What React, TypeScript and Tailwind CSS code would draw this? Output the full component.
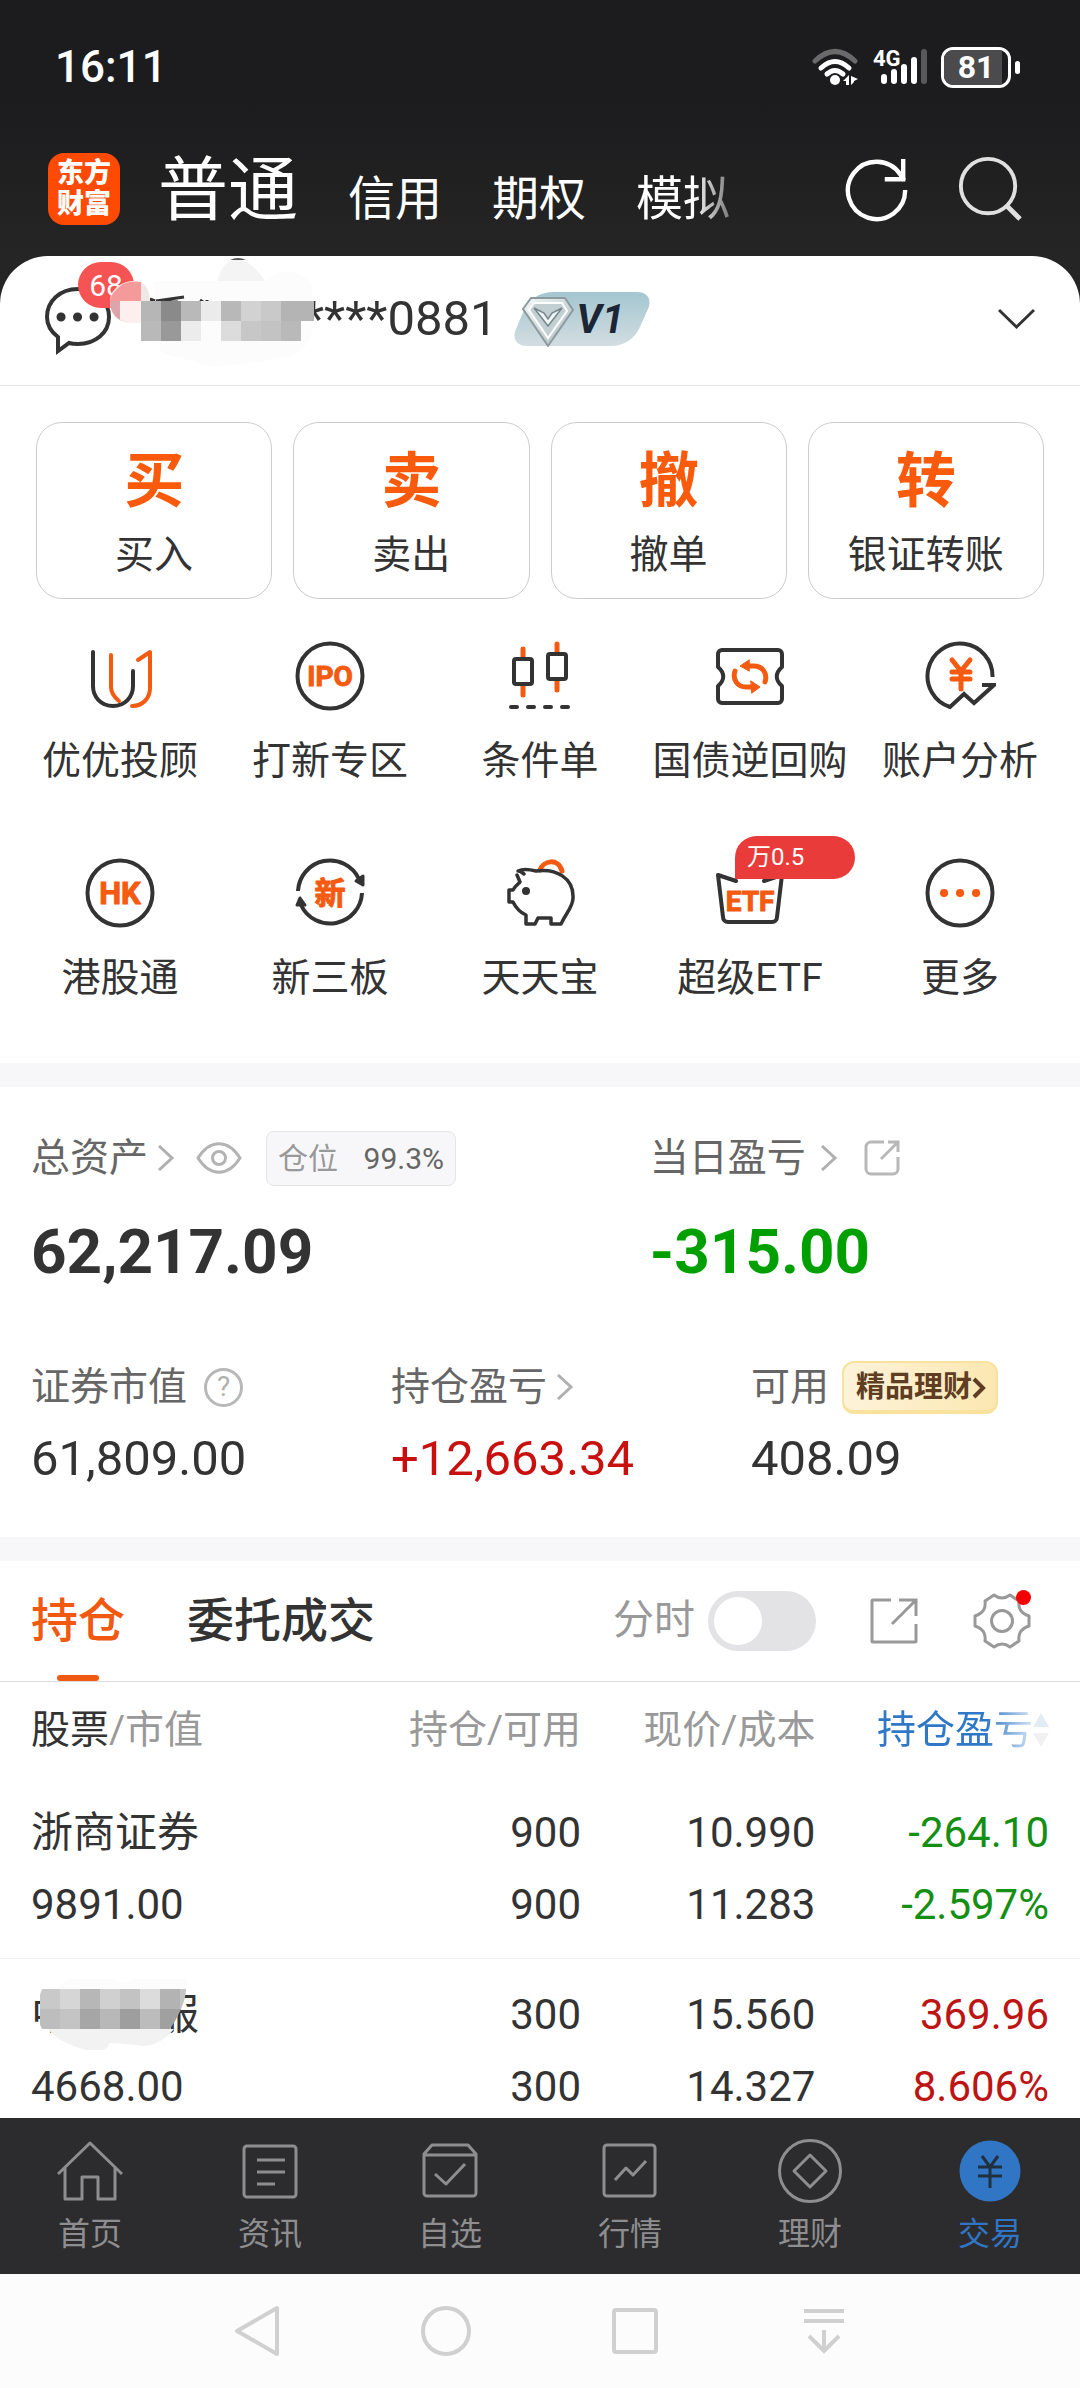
import type { ReactNode } from 'react'

const INK = '#333333'
const ORANGE = '#f45b10'

const TRADES = [
  { glyph: '买', label: '买入' },
  { glyph: '卖', label: '卖出' },
  { glyph: '撤', label: '撤单' },
  { glyph: '转', label: '银证转账' },
]

const HOLDINGS = [
  { name: '浙商证券', value: '9891.00', qty: '900', avail: '900', price: '10.990', cost: '11.283', pnl: '-264.10', pct: '-2.597%', up: false },
  { name: '', value: '4668.00', qty: '300', avail: '300', price: '15.560', cost: '14.327', pnl: '369.96', pct: '8.606%', up: true },
]

/* ---------- icons ---------- */

function Glyph({ children }: { children: ReactNode }) {
  return (
    <svg className="size-[72px]" viewBox="0 0 72 72" fill="none" stroke={INK} strokeWidth="4" strokeLinecap="round" strokeLinejoin="round">
      {children}
    </svg>
  )
}

function GlyphText({ size, y, children }: { size: number; y: number; children: string }) {
  return (
    <text x="36" y={y} textAnchor="middle" fontSize={size} fontWeight="700" fill={ORANGE} stroke={ORANGE} strokeWidth="1">
      {children}
    </text>
  )
}

const AdvisorIcon = (
  <Glyph>
    <path d="M9 11v34c0 11 8 20 20 20s20-9 20-20V30" />
    <path d="M27 14v32c0 6 3 10 8 14M54 19l12-8v36c0 10-7 18-18 18" stroke={ORANGE} />
  </Glyph>
)

const IpoIcon = (
  <Glyph>
    <circle cx="36" cy="35" r="32.500" />
    <GlyphText size={28} y={45}>IPO</GlyphText>
  </Glyph>
)

const CandleIcon = (
  <Glyph>
    <path d="M19 8v9M19 45v9M53 3v9M53 40v9" stroke={ORANGE} strokeWidth="5" />
    <rect x="10" y="18" width="18" height="25" rx="2" />
    <rect x="44" y="13" width="18" height="25" rx="2" />
    <path d="M7 66h6M24 66h6M41 66h6M58 66h6" />
  </Glyph>
)

const TicketIcon = (
  <Glyph>
    <path d="M8 9h56a4 4 0 0 1 4 4v13c-7 6-7 13 0 19v13a4 4 0 0 1-4 4H8a4 4 0 0 1-4-4V45c7-6 7-13 0-19V13a4 4 0 0 1 4-4z" />
    <path d="M21 30c-3 9 3 16 11 16h6M51 41c3-9-3-16-11-16h-6" stroke={ORANGE} strokeWidth="5" />
    <path d="M37 40l9 6-8 6zM35 19l-9 6 9 5z" fill={ORANGE} stroke={ORANGE} strokeWidth="1" />
  </Glyph>
)

const AnalysisIcon = (
  <Glyph>
    <path d="M68.500 36A32.500 32.500 0 1 0 26 66l14-13 10 9 20-18H58" strokeLinecap="butt" strokeLinejoin="miter" />
    <path d="M28 19l9 11 9-11M37 30v18M28 31h18M28 38h18" stroke={ORANGE} strokeWidth="5" />
  </Glyph>
)

const HkIcon = (
  <Glyph>
    <circle cx="36" cy="35" r="32.500" />
    <GlyphText size={31} y={46}>HK</GlyphText>
  </Glyph>
)

const BoardIcon = (
  <Glyph>
    <path d="M4 33A32 32 0 0 1 65 21M68 35A32 32 0 0 1 7 47" strokeLinecap="butt" />
    <path d="M62 23l7-5v9zM3 47l3-7 5 7z" fill={INK} strokeWidth="3" />
    <GlyphText size={31} y={46}>新</GlyphText>
  </Glyph>
)

const PiggyIcon = (
  <Glyph>
    <path d="M36 12c3-9 18-13 22 1" stroke={ORANGE} strokeWidth="5" />
    <path d="M20 16c-4-3-4-3-6-3 6-3 14-1 18 0 20-3 38 7 37 27 0 9-7 15-12 26H47v-6H34l-3 6H22v-9c-7-3-10-7-13-13H5V32h4c2-4 5-6 7-8l-3-7" strokeWidth="3.500" />
    <circle cx="22" cy="33" r="4" fill={INK} stroke="none" />
  </Glyph>
)

const EtfIcon = (
  <Glyph>
    <path d="M22 23L4 17l5 42a5 5 0 0 0 5 5h44a5 5 0 0 0 5-5l5-42-18 6" />
    <GlyphText size={28} y={53}>ETF</GlyphText>
  </Glyph>
)

const MoreIcon = (
  <Glyph>
    <circle cx="36" cy="35" r="32.500" />
    <path d="M20 35h.1M36 35h.1M52 35h.1" stroke={ORANGE} strokeWidth="8" />
  </Glyph>
)

const SERVICES: { label: string; icon: ReactNode; badge?: string }[] = [
  { label: '优优投顾', icon: AdvisorIcon },
  { label: '打新专区', icon: IpoIcon },
  { label: '条件单', icon: CandleIcon },
  { label: '国债逆回购', icon: TicketIcon },
  { label: '账户分析', icon: AnalysisIcon },
  { label: '港股通', icon: HkIcon },
  { label: '新三板', icon: BoardIcon },
  { label: '天天宝', icon: PiggyIcon },
  { label: '超级ETF', icon: EtfIcon, badge: '万0.5' },
  { label: '更多', icon: MoreIcon },
]

function Chevron() {
  return (
    <svg className="h-[26px] w-[18px] shrink-0" viewBox="0 0 18 26" fill="none" stroke="#b0b0b0" strokeWidth="3">
      <path d="M2 1l13 12L2 25" />
    </svg>
  )
}

function NavIcon({ children }: { children: ReactNode }) {
  return (
    <svg className="size-[66px]" viewBox="0 0 66 66" fill="none" stroke="#8e8e90" strokeWidth="3" strokeLinejoin="round">
      {children}
    </svg>
  )
}

const NAV: { label: string; icon: ReactNode; active?: boolean }[] = [
  { label: '首页', icon: <path d="M1 36L33 5l32 31M8 30v31h17V39h16v22h17V30" /> },
  {
    label: '资讯',
    icon: (
      <>
        <rect x="7" y="8" width="52" height="51" rx="3" />
        <path d="M20 22h28M20 34h28M20 46h18" />
      </>
    ),
  },
  {
    label: '自选',
    icon: (
      <>
        <path d="M7 16l8-9h36l8 9v39a3 3 0 0 1-3 3H10a3 3 0 0 1-3-3zM7 17h52" />
        <path d="M18 36l11 10 19-20" />
      </>
    ),
  },
  {
    label: '行情',
    icon: (
      <>
        <rect x="7" y="7" width="51" height="51" rx="3" />
        <path d="M18 42l11-12 7 7 13-14" />
      </>
    ),
  },
  {
    label: '理财',
    icon: (
      <>
        <circle cx="33" cy="33" r="30.500" />
        <path d="M33 17l16 16-16 16-16-16z" />
      </>
    ),
  },
  {
    label: '交易',
    active: true,
    icon: (
      <>
        <circle cx="33" cy="33" r="30.500" fill="#3076c5" stroke="none" />
        <path d="M25 18l8 11 8-11M33 29v21M21 29h24M21 38h24" stroke="#20303f" />
      </>
    ),
  },
]

/* ---------- sections ---------- */

function StatusBar() {
  return (
    <div className="flex h-[134px] items-center justify-between pr-[60px] pl-[55px] text-white">
      <span className="text-[44px] font-medium">16:11</span>
      <div className="flex items-center gap-[14px]">
        <svg className="h-[40px] w-[48px]" viewBox="0 0 48 40" fill="none" stroke="#fff" strokeWidth="5" strokeLinecap="round">
          <path d="M4 14Q24-5 44 14" stroke="#6a6a6b" />
          <path d="M10 21Q24 8 38 21M16 27Q24 20 32 27" />
          <circle cx="24" cy="33" r="5" fill="#fff" stroke="none" />
          <path d="M32 34l6-6v10h-3v-4zM40 29l7 3-4 2v1l-3 3z" fill="#fff" stroke="none" />
        </svg>
        <svg className="h-[40px] w-[54px]" viewBox="0 0 54 40" stroke="#fff" strokeWidth="6" strokeLinecap="round">
          <text x="0" y="19" fontSize="22" fontWeight="700" fill="#fff" stroke="none">4G</text>
          <path d="M11 30v4M21 25v9M31 20v14M41 13v21" />
          <path d="M51 5v29" stroke="#59595a" />
        </svg>
        <div className="flex items-center gap-1">
          <div className="relative flex h-[41px] w-[70px] items-center justify-center overflow-hidden rounded-xl border-3 border-white">
            <div className="absolute inset-y-0 left-0 w-[58px] bg-[#4b4b4d]" />
            <span className="relative text-[32px] leading-none font-bold">81</span>
          </div>
          <div className="h-[13px] w-[5px] rounded-full bg-white" />
        </div>
      </div>
    </div>
  )
}

function TopTabs() {
  return (
    <div className="flex h-[122px] items-center pr-[58px] pb-[12px] pl-[48px] text-white">
      <div className="flex size-[72px] shrink-0 flex-col items-center justify-center rounded-2xl bg-[#ff4a03] text-[27px] leading-[31px] font-black">
        <span>东方</span>
        <span>财富</span>
      </div>
      <nav className="ml-[38px] flex flex-1 items-baseline gap-[50px] pt-[12px] text-[47px] leading-[94px] whitespace-nowrap">
        <button className="text-[70px]">普通</button>
        <button>信用</button>
        <button>期权</button>
        <button className="[mask-image:linear-gradient(to_right,#000_60%,#0006)]">模拟</button>
      </nav>
      <button aria-label="刷新">
        <svg className="size-[66px]" viewBox="0 0 68 68" fill="none" stroke="#fff" strokeWidth="4.500">
          <path d="M63 35A29.500 29.500 0 1 1 58 19L62 25" />
          <path d="M42 24h19V3" />
        </svg>
      </button>
      <button aria-label="搜索" className="ml-[46px]">
        <svg className="size-[66px]" viewBox="0 0 68 68" fill="none" stroke="#e0e0e0" strokeWidth="4">
          <circle cx="33" cy="31" r="28" />
          <path d="M52 51l14 14" strokeWidth="5" />
        </svg>
      </button>
    </div>
  )
}

// pixelated strip over the masked owner name
function NameMosaic() {
  const rows = [
    ['#b6b6b6', '#8a8a8a', '#b9b9b9', '#ebebeb', '#b8b8b8', '#d2d2d2', '#c9c9c9', '#b4b4b4'],
    ['#b9b9b9', '#999999', '#ececec', '#fcfcfc', '#dcdcdc', '#c7c7c7', '#c3c3c3', '#b9b9b9'],
  ]
  return (
    <svg className="absolute top-0 left-[108px] h-[120px] w-[208px]" viewBox="0 0 208 120">
      <path d="M108 25C112 8 122 3 130 3c12 2 20 12 28 22 10-12 34-14 46 4v46c-4 18-18 26-34 28-30 4-60 10-76 6-14-8-30-6-42-14l-6-70z" fill="#fcfcfc" />
      <path d="M110 25C113 9 122 3 130 3c12 2 20 12 27 22z" fill="#f4f4f4" />
      <path d="M122 4q8-4 16 0z" fill="#555" />
      <path d="M42 43l5 2M48 45l28-4M52 46h18M92 44l3 2M99 44v2" stroke={INK} strokeWidth="3" />
      <path d="M2 45c0-12 12-20 24-20s16 10 16 22v20H22C8 66 2 58 2 45z" fill="#f0e7e7" />
      <path d="M10 32c6-6 12-7 23-6v19H2c1-6 4-9 8-13z" fill="#f59a9b" />
      <path d="M2 45h10v19C5 60 2 53 2 45z" fill="#dba5ab" />
      <path d="M12 45h21v22H22c-4-1-7-2-10-4z" fill="#fdefef" />
      {rows.map((row, r) =>
        row.map((fill, c) => (
          <rect key={`${r}-${c}`} x={33 + c * 20} y={45 + r * 20} width={r === 0 && c === 7 ? 33 : 20} height="20" fill={fill} />
        )),
      )}
    </svg>
  )
}

function AccountRow() {
  return (
    <div className="relative flex h-[130px] items-center border-b border-[#e6e6e6] pr-[45px] pb-[3px] pl-[44px]">
      <svg className="h-[72px] w-[68px]" viewBox="0 0 68 72" fill="none" stroke={INK} strokeWidth="4">
        <path d="M14 54C6 48 3 41 3 34 3 18 16 6 34 6s31 12 31 28-14 27-31 27c-4 0-6 0-9-1l-11 8z" />
        <path d="M17 34h.1M33.500 34h.1M50 34h.1" strokeWidth="9" strokeLinecap="round" />
      </svg>
      <span className="absolute top-[6px] left-[78px] flex h-[46px] w-[56px] items-center justify-center rounded-full bg-[#f55354] text-[30px] text-white">
        68
      </span>
      <span className="ml-[191px] text-[49px] text-[#333]">****0881</span>
      <NameMosaic />
      <div className="relative ml-[16px] h-[56px] w-[138px]">
        <svg className="absolute inset-0 size-full" viewBox="0 0 138 56">
          <defs>
            <linearGradient id="tag" x1="0" y1="0" x2="0" y2="1">
              <stop offset="0" stopColor="#a3c6d0" />
              <stop offset="1" stopColor="#d3dde1" />
            </linearGradient>
            <linearGradient id="gem" x1="0" y1="0" x2="1" y2="1">
              <stop offset="0" stopColor="#f4f8f9" />
              <stop offset="1" stopColor="#a9b9bd" />
            </linearGradient>
          </defs>
          <path d="M40 1h83c11 0 15 8 11 17l-9 20c-5 10-15 17-28 17H13C2 55-2 47 2 38l8-19C15 8 26 1 40 1z" fill="url(#tag)" />
          <path d="M17 7h34l8 12-25 36L9 18z" fill="url(#gem)" stroke="#8c999d" strokeWidth="2" strokeLinejoin="round" />
          <path d="M20 12h28l5 8-19 27-19-28z" fill="#c3d0d3" stroke="#fff" strokeWidth="2" />
          <path d="M20 17l14 18 14-18-10 5-4 6-4-6z" fill="#eef5f6" stroke="#76868a" strokeWidth="1.500" />
        </svg>
        <span className="absolute top-[2px] left-[63px] text-[40px] leading-[54px] font-bold text-[#1c2536] italic">V1</span>
      </div>
      <button aria-label="切换账户" className="ml-auto">
        <svg className="h-[22px] w-[37px]" viewBox="0 0 37 22" fill="none" stroke={INK} strokeWidth="3">
          <path d="M1 2l17.500 17L36 2" />
        </svg>
      </button>
    </div>
  )
}

function QuickActions() {
  return (
    <section className="pt-[36px] pb-[57px]">
      <div className="grid grid-cols-4 gap-[21px] px-[36px]">
        {TRADES.map((t) => (
          <button key={t.label} className="flex flex-col items-center rounded-[26px] border border-[#ccc] pt-[24px] pb-[15px]">
            <span className="text-[60px] leading-[70px] font-bold text-[#f95a0c]">{t.glyph}</span>
            <span className="mt-[10px] text-[39px] leading-[56px]">{t.label}</span>
          </button>
        ))}
      </div>
      <div className="mt-[42px] grid grid-cols-5 gap-y-[69px] px-[15px]">
        {SERVICES.map((s) => (
          <button key={s.label} className="relative flex flex-col items-center">
            {s.icon}
            {s.badge && (
              <span className="absolute -top-[22px] left-[90px] h-[43px] w-[120px] rounded-r-full rounded-tl-full bg-[#ea3b3b] pl-[12px] text-left text-[24px] leading-[43px] text-white">
                {s.badge}
              </span>
            )}
            <span className="mt-[20px] text-[39px] leading-[56px] whitespace-nowrap">{s.label}</span>
          </button>
        ))}
      </div>
    </section>
  )
}

function Assets() {
  return (
    <section className="border-y-24 border-[#f7f7f9] pt-[44px] pb-[48px]">
      <div className="flex">
        <div className="w-[57.3%] pl-[31px]">
          <div className="flex h-[54px] items-center text-[39px] text-[#666]">
            总资产
            <span className="ml-[9px] flex"><Chevron /></span>
            <svg className="ml-[21px] h-[34px] w-[46px]" viewBox="0 0 46 34" fill="none" stroke="#b3b3b3" strokeWidth="3">
              <path d="M2 17C14-2 32-2 44 17 32 36 14 36 2 17z" />
              <circle cx="23" cy="17" r="6.500" />
            </svg>
            <span className="ml-[24px] flex h-[55px] w-[190px] items-center justify-between rounded-lg border border-[#e5e5e8] bg-[#f7f7f9] px-[11px] text-[30px]">
              <span className="text-[#999]">仓位</span>
              <span>99.3%</span>
            </span>
          </div>
          <div className="mt-[32px] text-[62px] leading-[70px] font-bold">62,217.09</div>
        </div>
        <div className="pl-[31px]">
          <div className="flex h-[54px] items-center text-[39px] text-[#666]">
            当日盈亏
            <span className="ml-[14px] flex"><Chevron /></span>
            <svg className="ml-[26px] size-[36px]" viewBox="0 0 36 36" fill="none" stroke="#b8b8b8" strokeWidth="3">
              <path d="M20 2H7a5 5 0 0 0-5 5v22a5 5 0 0 0 5 5h22a5 5 0 0 0 5-5V17M24 2h10v10M34 2L17 19" />
            </svg>
          </div>
          <div className="mt-[32px] text-[62px] leading-[70px] font-bold text-[#009f00]">-315.00</div>
        </div>
      </div>
      <div className="mt-[73px] grid grid-cols-3">
        <div className="pl-[31px]">
          <div className="flex h-[54px] items-center text-[39px] text-[#666]">
            证券市值
            <span className="ml-[17px] flex size-[39px] items-center justify-center rounded-full border-3 border-[#b8b8b8] text-[28px] text-[#b0b0b0]">?</span>
          </div>
          <div className="mt-[15px] text-[49px] leading-[60px]">61,809.00</div>
        </div>
        <div className="pl-[31px]">
          <div className="flex h-[54px] items-center text-[39px] text-[#666]">
            持仓盈亏
            <span className="ml-[9px] flex"><Chevron /></span>
          </div>
          <div className="mt-[15px] text-[49px] leading-[60px] text-[#c8100f]">+12,663.34</div>
        </div>
        <div className="pl-[31px]">
          <div className="flex h-[54px] items-center text-[39px] text-[#666]">
            可用
            <button className="ml-[13px] flex h-[53px] items-center rounded-xl border-2 border-b-4 border-[#f8e29c] bg-linear-to-r from-[#fdf3da] to-[#fbe7b0] pt-[4px] pr-[10px] pl-[12px] text-[29px] font-bold text-[#5f3d22]">
              精品理财
              <svg className="h-[22px] w-[14px]" viewBox="0 0 14 22" fill="none" stroke="#5f3d22" strokeWidth="4">
                <path d="M2 2l9 9-9 9" />
              </svg>
            </button>
          </div>
          <div className="mt-[15px] text-[49px] leading-[60px]">408.09</div>
        </div>
      </div>
    </section>
  )
}

function PositionTabs() {
  return (
    <div className="flex h-[121px] items-center border-b border-[#ddd] pr-[49px] pl-[31px] text-[47px]">
      <button className="relative flex h-full items-center font-medium text-[#f0590f]">
        持仓
        <span className="absolute bottom-0 left-1/2 h-[6px] w-[42px] -translate-x-1/2 rounded-full bg-[#f0590f]" />
      </button>
      <button className="ml-[62px] font-medium">委托成交</button>
      <label className="ml-auto flex items-center gap-[13px] text-[41px] text-[#999]">
        分时
        <input
          type="checkbox"
          className="relative h-[60px] w-[108px] appearance-none rounded-full bg-[#e3e3e6] before:absolute before:top-[6px] before:left-[6px] before:size-[48px] before:rounded-full before:bg-white"
        />
      </label>
      <button aria-label="分享" className="ml-[54px]">
        <svg className="size-[48px]" viewBox="0 0 48 48" fill="none" stroke="#999" strokeWidth="3">
          <path d="M21 3H3a1 1 0 0 0-1 1v40a1 1 0 0 0 1 1h42a1 1 0 0 0 1-1V27M29 3h17v16M46 3L22 27" />
        </svg>
      </button>
      <button aria-label="设置" className="relative ml-[55px]">
        <svg className="size-[58px]" viewBox="0 0 58 58" fill="none" stroke="#999" strokeWidth="3" strokeLinejoin="round">
          <path d="M21 3q8 6 16 0l9 6c-1 8 2 12 10 15v10c-8 3-11 7-10 15l-9 6q-8-6-16 0l-9-6c1-8-2-12-10-15V24c8-3 11-7 10-15z" />
          <circle cx="29" cy="29" r="10.500" />
        </svg>
        <span className="absolute -top-[2px] right-0 size-[15px] rounded-full bg-[#f40000]" />
      </button>
    </div>
  )
}

function MaskedName() {
  const rows = [
    ['#c9c9c9', '#d6d6d6', '#b7b7b7', '#d0d0d0', '#c3c3c3', '#dcdcdc', '#b3b3b3', '#c4c4c4'],
    ['#bdbdbd', '#c4c4c4', '#a6a6a6', '#b8b8b8', '#9e9e9e', '#bcbcbc', '#a0a0a0', '#aaaaaa'],
  ]
  return (
    <span className="relative flex w-[168px] justify-between">
      <span>中</span>
      <span>服</span>
      <svg className="absolute top-0 left-[5px] h-[80px] w-[156px]" viewBox="0 0 156 80">
        <defs>
          <clipPath id="blob">
            <path d="M6 10h144c0 12-8 28-16 40H6C1 42 1 22 6 10z" />
          </clipPath>
        </defs>
        <path d="M20 10C40-12 70-6 84 4 100 4 130-16 151-20v31z" fill="#fcfcfc" />
        <path d="M12 50h126c-8 10-18 16-30 17-12-1-22-3-34-3-3 4-4 6-7 7H50c-14-4-30-10-38-21z" fill="#f2f2f2" />
        <g clipPath="url(#blob)">
          {rows.map((row, r) =>
            row.map((fill, c) => <rect key={`${r}-${c}`} x={4 + c * 20} y={10 + r * 20} width="20" height="20" fill={fill} />),
          )}
        </g>
      </svg>
    </span>
  )
}

function Holdings() {
  return (
    <table className="w-full table-fixed text-right text-[42px] leading-[72px]">
      <thead className="h-[95px] text-[39px] text-[#999]">
        <tr>
          <th className="pl-[31px] text-left font-normal"><span className="text-[#333]">股票</span>/市值</th>
          <th className="w-[21.7%] font-normal">持仓/可用</th>
          <th className="w-[21.7%] font-normal">现价/成本</th>
          <th className="w-[24.5%] pr-[31px] font-normal">
            <button className="inline-flex items-center text-[#2f78c8]">
              <span className="[mask-image:linear-gradient(to_right,#000_70%,#0003)]">持仓盈亏</span>
              <svg className="h-[36px] w-[16px]" viewBox="0 0 16 36">
                <path d="M8 1l8 14H0z" fill="#e2ecf7" />
                <path d="M8 35l8-14H0z" fill="#f1f1f2" />
              </svg>
            </button>
          </th>
        </tr>
      </thead>
      <tbody>
        {HOLDINGS.map((h) => (
          <tr key={h.value} className="border-b border-[#eee]">
            <td className="pt-[20px] pb-[17px] pl-[31px] text-left">
              <div>{h.name || <MaskedName />}</div>
              <div>{h.value}</div>
            </td>
            <td className="pt-[20px] pb-[17px]">
              <div>{h.qty}</div>
              <div>{h.avail}</div>
            </td>
            <td className="pt-[20px] pb-[17px]">
              <div>{h.price}</div>
              <div>{h.cost}</div>
            </td>
            <td className={h.up ? 'pt-[20px] pr-[31px] pb-[17px] text-[#bd1414]' : 'pt-[20px] pr-[31px] pb-[17px] text-[#148f14]'}>
              <div>{h.pnl}</div>
              <div>{h.pct}</div>
            </td>
          </tr>
        ))}
      </tbody>
    </table>
  )
}

function BottomNav() {
  return (
    <nav className="grid h-[156px] shrink-0 grid-cols-6 bg-[#2c2c2e] pt-[20px]">
      {NAV.map((n) => (
        <a key={n.label} href="#" className="flex flex-col items-center">
          <NavIcon>{n.icon}</NavIcon>
          <span className={n.active ? 'mt-[10px] text-[32px] leading-[40px] text-[#3076c5]' : 'mt-[10px] text-[32px] leading-[40px] text-[#8e8e90]'}>
            {n.label}
          </span>
        </a>
      ))}
    </nav>
  )
}

function SystemBar() {
  return (
    <div className="grid h-[114px] shrink-0 grid-cols-4 place-items-center bg-[#fcfcfc] px-[15%]">
      <button aria-label="返回">
        <svg className="size-[52px]" viewBox="0 0 52 52" fill="none" stroke="#d0d0d0" strokeWidth="4" strokeLinejoin="round">
          <path d="M46 3v46L6 26z" />
        </svg>
      </button>
      <button aria-label="主屏幕">
        <svg className="size-[52px]" viewBox="0 0 52 52" fill="none" stroke="#d0d0d0" strokeWidth="4">
          <circle cx="26" cy="26" r="23" />
        </svg>
      </button>
      <button aria-label="最近任务">
        <svg className="size-[52px]" viewBox="0 0 52 52" fill="none" stroke="#d0d0d0" strokeWidth="4">
          <rect x="5" y="5" width="42" height="42" rx="2" />
        </svg>
      </button>
      <button aria-label="收起">
        <svg className="size-[52px]" viewBox="0 0 52 52" fill="none" stroke="#d0d0d0" strokeWidth="4">
          <path d="M6 6h40M6 16h40M26 25v21M11 31l15 15 15-15" />
        </svg>
      </button>
    </div>
  )
}

export default function App() {
  return (
    <div className="flex h-screen flex-col bg-[#252525] font-['Roboto','Noto_Sans_CJK_SC',sans-serif] text-[#333]">
      <header className="shrink-0 bg-linear-to-b from-[#1c1c1e] from-40% to-[#252525]">
        <StatusBar />
        <TopTabs />
      </header>
      <main className="min-h-0 flex-1 overflow-hidden rounded-t-[48px] bg-white">
        <AccountRow />
        <QuickActions />
        <Assets />
        <PositionTabs />
        <Holdings />
      </main>
      <BottomNav />
      <SystemBar />
    </div>
  )
}
